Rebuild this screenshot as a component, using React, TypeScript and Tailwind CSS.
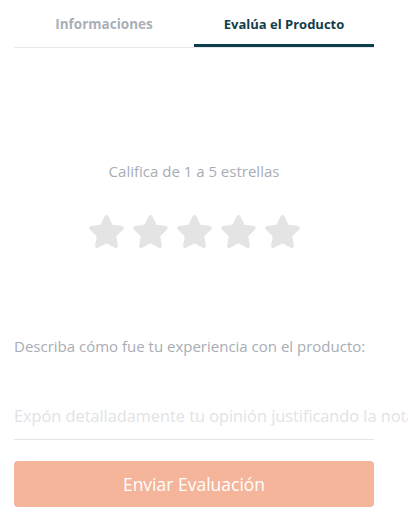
import React from "react";

function Star() {
  return (
    <svg viewBox="0 0 576 512" className="w-[37px] h-[33px]" fill="#e4e4e4">
      <path d="M259.3 17.8L194 150.2 47.9 171.5c-26.2 3.8-36.7 36.1-17.7 54.6l105.7 103-25 145.5c-4.5 26.3 23.2 46 46.4 33.7L288 439.6l130.7 68.7c23.2 12.2 50.9-7.4 46.4-33.7l-25-145.5 105.7-103c19-18.5 8.5-50.8-17.7-54.6L382 150.2 316.7 17.8c-11.7-23.6-45.6-23.9-57.4 0z" />
    </svg>
  );
}

export default function App() {
  return (
    <div
      className="w-[408px] h-[527px] overflow-hidden bg-white px-[14px]"
      style={{ fontFamily: '"Open Sans", sans-serif' }}
    >
      <div className="w-[360px]">
        {/* TABS */}
        <div className="flex border-b border-[#e6e8eb]">
          <div className="w-1/2 h-[47px] flex justify-center pt-[14px] text-[13.5px] leading-5 font-bold text-[#a9afb7]">
            Informaciones
          </div>
          <div className="w-1/2 h-[47px] flex justify-center pt-[14px] text-[13px] leading-5 font-bold text-[#123d4a] border-b-[3px] border-[#0f3d4c]">
            Evalúa el Producto
          </div>
        </div>

        {/* RATING */}
        <div className="flex flex-col items-center pt-[113px]">
          <p className="text-[15px] text-[#a7adb5] leading-5">Califica de 1 a 5 estrellas</p>
          <div className="flex gap-[7px] mt-[34px]">
            {[1, 2, 3, 4, 5].map((n) => (
              <Star key={n} />
            ))}
          </div>
        </div>

        {/* COMMENT */}
        <p className="mt-[86px] text-[15px] text-[#a7adb5] leading-6 whitespace-nowrap">
          Describa cómo fue tu experiencia con el producto:
        </p>
        <div className="mt-[44px] border-b border-[#e3e5e8] pb-[9px]">
          <div className="whitespace-nowrap text-[16.3px] leading-7 text-[#e1e3e6]">
            Expón detalladamente tu opinión justificando la nota
          </div>
        </div>

        <button className="mt-[21px] w-full h-[46px] rounded-[4px] bg-[#f5b59a] text-white text-[17.5px]">
          Enviar Evaluación
        </button>
      </div>
    </div>
  );
}
